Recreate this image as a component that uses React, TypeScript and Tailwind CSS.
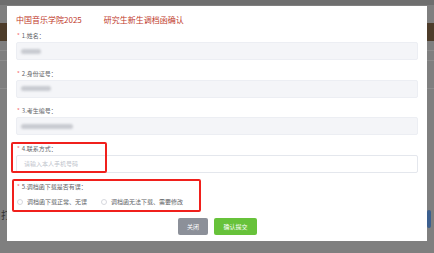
import React from 'react';

const font = { fontFamily: '"Noto Sans CJK SC", "Noto Sans", sans-serif' };

function Label({ text }: { text: string }) {
  return (
    <div className="flex h-[10px] items-center pl-[1px] text-[6px] leading-[10px] text-[#606266]">
      <span className="mr-[2px] text-[#f56c6c]">*</span>
      {text}
    </div>
  );
}

function Field({ label, blur }: { label: string; blur: string }) {
  return (
    <div className="flex flex-col gap-[1px]">
      <Label text={label} />
      <div className="flex h-[18px] items-center rounded-[2px] border border-[#eceef3] bg-[#f4f5f8] px-[4px]">
        <div className={`h-[5px] rounded-sm bg-[#c9cbd1] blur-[1px] ${blur}`} />
      </div>
    </div>
  );
}

function Radio({ text }: { text: string }) {
  return (
    <div className="flex items-center gap-[4px]">
      <span className="h-[6px] w-[6px] rounded-full border border-[#d6d8de] bg-white" />
      <span className="text-[6px] leading-[10px] text-[#606266]">{text}</span>
    </div>
  );
}

export default function App() {
  return (
    <div className="relative h-[253px] w-[434px] overflow-hidden bg-[#7f7f7f]" style={font}>
      {/* page behind the mask */}
      <div className="flex flex-col">
        <div className="h-[5px] bg-[#6e6e6e]" />
        <div className="h-[18px]" />
        <div className="h-[18px] bg-[#4d3c2a]" />
        <div className="h-[9px]" />
        <div className="h-px bg-[#8c8c8c]" />
        <div className="h-[9px]" />
        <div className="h-px bg-[#8c8c8c]" />
        <div className="h-[27px]" />
        <div className="h-px bg-[#8c8c8c]" />
        <div className="h-[119px]" />
        <div className="flex h-[20px] items-start justify-between">
          <span className="ml-[1px] text-[10px] leading-[14px] text-[#333]">打</span>
          <div className="mr-[3px] mt-[2px] h-[18px] w-[4px] rounded-sm bg-[#3c5f8e]" />
        </div>
      </div>

      {/* dialog */}
      <div className="absolute left-[7px] top-[6px] flex h-[235px] w-[420px] flex-col bg-white px-[9px]">
        <div className="mt-[8px] flex h-[12px] items-center gap-[22px] text-[8px] leading-[12px] text-[#c0392b]">
          <span>中国音乐学院2025</span>
          <span>研究生新生调档函确认</span>
        </div>

        <div className="mt-[5px] flex flex-col gap-[8.5px]">
          <Field label="1.姓名：" blur="w-[20px]" />
          <Field label="2.身份证号：" blur="w-[30px]" />
          <Field label="3.考生编号：" blur="w-[52px]" />
          <div className="flex flex-col gap-[1px]">
            <Label text="4.联系方式：" />
            <div className="flex h-[18px] items-center rounded-[2px] border border-[#e4e7ed] bg-white px-[7px] text-[6px] text-[#c0c4cc]">
              请输入本人手机号码
            </div>
          </div>
        </div>

        <div className="mt-[9px] flex flex-col gap-[5px]">
          <Label text="5.调档函下载是否有误：" />
          <div className="flex items-center gap-[14px] pl-[1px]">
            <Radio text="调档函下载正常、无误" />
            <Radio text="调档函无法下载、需要修改" />
          </div>
        </div>

        <div className="mt-[11px] flex justify-center gap-[6px] pl-[1px]">
          <button className="h-[17px] w-[30px] rounded-[2px] bg-[#8c9099] text-[6px] text-white">关闭</button>
          <button className="h-[17px] w-[43px] rounded-[2px] bg-[#67c23a] text-[6px] text-white">确认提交</button>
        </div>

        {/* red annotation boxes */}
        <div className="absolute left-[4px] top-[136px] h-[31px] w-[96px] rounded-[2px] border-2 border-[#f0201c]" />
        <div className="absolute left-[5px] top-[173px] h-[33px] w-[189px] rounded-[2px] border-2 border-[#f0201c]" />
      </div>
    </div>
  );
}
